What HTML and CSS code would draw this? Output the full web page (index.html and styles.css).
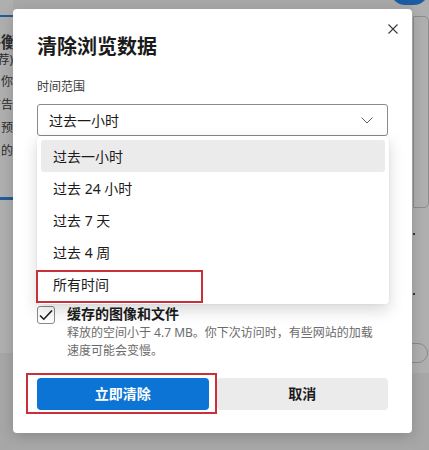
FILE: index.html
```html
<!DOCTYPE html>
<html lang="zh-CN">
<head>
<meta charset="utf-8">
<title>清除浏览数据</title>
<link rel="stylesheet" href="styles.css">
</head>
<body>
<div class="screen">
  <aside class="strip strip-left">
    <div class="bar"></div>
    <div class="ln ln-head"><span>平衡</span></div>
    <div class="ln ln-sub"><span>(推荐)</span></div>
    <div class="ln ln-body first"><span>你</span></div>
    <div class="ln ln-body"><span>广告</span></div>
    <div class="ln ln-body"><span>预</span></div>
    <div class="ln ln-body"><span>的</span></div>
    <div class="bar bar-low"></div>
  </aside>

  <section class="dialog">
    <h1 class="title">清除浏览数据</h1>
    <button class="close" aria-label="关闭">
      <svg width="10" height="10" viewBox="0 0 10 10"><path d="M0.5 0.5 L9.5 9.5 M9.5 0.5 L0.5 9.5" stroke="#3a3a3a" stroke-width="1.1" fill="none"/></svg>
    </button>

    <div class="field-label">时间范围</div>
    <div class="select-wrap">
      <div class="select">
        <span>过去一小时</span>
        <svg width="12" height="7" viewBox="0 0 12 7"><path d="M0.5 0.5 L6 6 L11.5 0.5" stroke="#5a5a5a" stroke-width="1" fill="none"/></svg>
      </div>
      <ul class="menu">
        <li class="active">过去一小时</li>
        <li>过去 24 小时</li>
        <li>过去 7 天</li>
        <li>过去 4 周</li>
        <li>所有时间<span class="annot annot-item"></span></li>
      </ul>
    </div>

    <div class="options">
      <div class="option under-menu">
        <span class="box"><svg width="14" height="12" viewBox="0 0 14 12"><path d="M1 6.5 L4.8 10.2 L13 1.5" stroke="#1b1b1b" stroke-width="1.6" fill="none"/></svg></span>
        <div><div class="opt-title">浏览历史记录</div><div class="opt-desc">5 项。在地址栏中包括自动完成功能。</div></div>
      </div>
      <div class="option under-menu">
        <span class="box"><svg width="14" height="12" viewBox="0 0 14 12"><path d="M1 6.5 L4.8 10.2 L13 1.5" stroke="#1b1b1b" stroke-width="1.6" fill="none"/></svg></span>
        <div><div class="opt-title">下载历史记录</div><div class="opt-desc">无</div></div>
      </div>
      <div class="option under-menu">
        <span class="box"><svg width="14" height="12" viewBox="0 0 14 12"><path d="M1 6.5 L4.8 10.2 L13 1.5" stroke="#1b1b1b" stroke-width="1.6" fill="none"/></svg></span>
        <div><div class="opt-title">Cookie 和其他站点数据</div><div class="opt-desc">来自 27 个站点。从大多数站点注销。</div></div>
      </div>
      <div class="option">
        <span class="box"><svg width="14" height="12" viewBox="0 0 14 12"><path d="M1 6.5 L4.8 10.2 L13 1.5" stroke="#1b1b1b" stroke-width="1.6" fill="none"/></svg></span>
        <div><div class="opt-title">缓存的图像和文件</div><div class="opt-desc">释放的空间小于 4.7 MB。你下次访问时，有些网站的加载速度可能会变慢。</div></div>
      </div>
    </div>

    <div class="actions">
      <button class="btn btn-primary">立即清除<span class="annot annot-btn"></span></button>
      <button class="btn btn-secondary">取消</button>
    </div>
  </section>

  <aside class="strip strip-right">
    <div class="pill-top"></div>
    <div class="panel"></div>
    <div class="dot"></div>
    <div class="dot dot2"></div>
    <div class="toggle"></div>
  </aside>
</div>
</body>
</html>
```

FILE: styles.css
```css
* { box-sizing: border-box; }
html, body { margin: 0; padding: 0; }
body {
  width: 429px;
  height: 450px;
  overflow: hidden;
  background: #a8a8a8;
  font-family: "Noto Sans", "Noto Sans CJK SC", sans-serif;
}
.screen {
  display: grid;
  grid-template-columns: 13px 399px 17px;
  height: 450px;
  overflow: hidden;
}

/* left backdrop */
.strip-left {
  overflow: hidden;
  display: flex;
  flex-direction: column;
  background: linear-gradient(#afafaf 0 353px, #a7a7a7 353px);
  color: #2c2c2c;
}
.bar { margin-top: 15px; height: 2px; background: #235c98; flex: none; }
.bar-low { margin-top: 35px; height: 3px; }
.ln { display: flex; justify-content: flex-end; white-space: nowrap; flex: none; }
.ln-head { margin-top: 16px; font-size: 16px; font-weight: 700; line-height: 18px; }
.ln-head span { margin-right: -4px; }
.ln-sub { font-size: 12px; line-height: 18px; }
.ln-body { font-size: 12px; line-height: 23px; }
.ln-body.first { margin-top: 1px; }

/* right backdrop */
.strip-right {
  position: relative;
  background: linear-gradient(#afafaf 0 373px, #a7a7a7 373px);
  display: flex;
  flex-direction: column;
}
.pill-top {
  position: absolute;
  top: -26px;
  left: -22px;
  width: 39px;
  height: 31px;
  border-radius: 16px;
  background: #1d5ca3;
}
.panel {
  margin: 16px 0 0 1px;
  width: 16px;
  height: 192px;
  border: 1px solid #8c8c8c;
  border-radius: 0 5px 5px 0;
  flex: none;
}
.dot { margin: 25px 0 0 1px; width: 2px; height: 2px; background: #333; flex: none; }
.dot2 { margin-top: 58px; }
.toggle {
  margin: 48px 0 0 -10px;
  width: 26px;
  height: 20px;
  border: 1px solid #8a8a8a;
  border-radius: 10px;
  flex: none;
}

/* dialog */
.dialog {
  position: relative;
  z-index: 2;
  align-self: start;
  margin-top: 9px;
  background: #fff;
  border-radius: 4px;
  box-shadow: 0 4px 14px rgba(0, 0, 0, 0.18);
  padding: 24px 24px 23px;
}
.title {
  margin: 0;
  font-size: 20px;
  font-weight: 700;
  line-height: 28px;
  color: #1b1b1b;
}
.close {
  position: absolute;
  top: 15px;
  right: 14px;
  width: 10px;
  height: 10px;
  padding: 0;
  border: 0;
  background: none;
  display: flex;
}
.field-label {
  margin-top: 16px;
  font-size: 12px;
  line-height: 20px;
  color: #3b3b3b;
}
.select-wrap { margin-top: 7px; position: relative; z-index: 3; }
.select {
  height: 32px;
  border: 1px solid #8a8a8a;
  border-radius: 3px;
  display: flex;
  align-items: center;
  justify-content: space-between;
  padding: 0 14px 0 11px;
  font-size: 14px;
  color: #1b1b1b;
}
.menu {
  position: absolute;
  top: 100%;
  left: 0;
  width: calc(100% + 1px);
  margin: 0;
  padding: 4px;
  list-style: none;
  background: #fff;
  border-radius: 4px;
  box-shadow: 0 6px 16px rgba(0, 0, 0, 0.16), 0 0 2px rgba(0, 0, 0, 0.08);
}
.menu li {
  position: relative;
  height: 32px;
  display: flex;
  align-items: center;
  padding-left: 12px;
  font-size: 14px;
  color: #1b1b1b;
  border-radius: 3px;
}
.menu li.active { background: #ebebeb; }

.annot {
  position: absolute;
  border: 2px solid #c9303a;
  pointer-events: none;
}
.annot-item { left: -5px; top: 2px; width: 167px; height: 33px; }
.annot-btn { left: -11px; top: -5px; width: 191px; height: 41px; }

.options {
  margin-top: 12px;
  display: flex;
  flex-direction: column;
  gap: 14px;
}
.option { display: flex; gap: 12px; }
.under-menu { visibility: hidden; }
.box {
  flex: none;
  width: 18px;
  height: 18px;
  margin-top: 2px;
  border: 1px solid #8a8a8a;
  border-radius: 3px;
  display: flex;
  align-items: center;
  justify-content: center;
}
.opt-title { font-size: 14px; font-weight: 700; line-height: 20px; color: #1b1b1b; }
.opt-desc { max-width: 312px; font-size: 12px; line-height: 18px; color: #6b6b6b; }

.actions {
  margin-top: 18px;
  display: grid;
  grid-template-columns: 1fr 1fr;
  gap: 8px;
}
.btn {
  height: 32px;
  border: 0;
  border-radius: 4px;
  padding: 0;
  font-family: inherit;
  font-size: 14px;
  font-weight: 700;
  line-height: 32px;
}
.btn-primary { position: relative; background: #0c74d4; color: #fff; }
.btn-secondary { background: #ebebeb; color: #1b1b1b; }
```
